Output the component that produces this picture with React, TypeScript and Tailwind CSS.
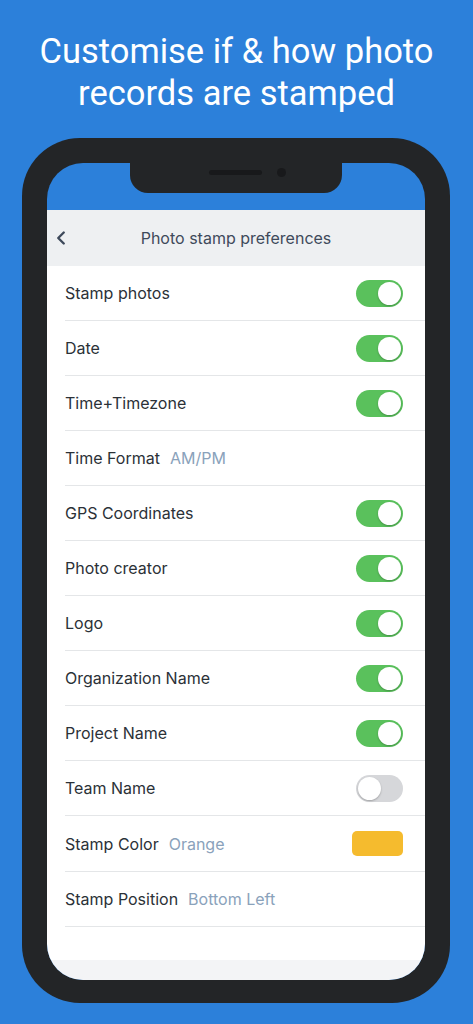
import { ChevronLeft } from "lucide-react"

type Row =
  | { label: string; kind: "toggle"; on: boolean }
  | { label: string; kind: "value"; value: string }
  | { label: string; kind: "color"; value: string }

const rows: Row[] = [
  { label: "Stamp photos", kind: "toggle", on: true },
  { label: "Date", kind: "toggle", on: true },
  { label: "Time+Timezone", kind: "toggle", on: true },
  { label: "Time Format", kind: "value", value: "AM/PM" },
  { label: "GPS Coordinates", kind: "toggle", on: true },
  { label: "Photo creator", kind: "toggle", on: true },
  { label: "Logo", kind: "toggle", on: true },
  { label: "Organization Name", kind: "toggle", on: true },
  { label: "Project Name", kind: "toggle", on: true },
  { label: "Team Name", kind: "toggle", on: false },
  { label: "Stamp Color", kind: "color", value: "Orange" },
  { label: "Stamp Position", kind: "value", value: "Bottom Left" },
]

function Toggle({ on }: { on: boolean }) {
  return (
    <span
      className={
        on
          ? "flex h-[27px] w-[47px] items-center justify-end rounded-full bg-[#5ac15c] px-[2px]"
          : "flex h-[27px] w-[47px] items-center justify-start rounded-full bg-[#d6d7da] px-[2px]"
      }
    >
      <span className="h-[23px] w-[23px] rounded-full bg-white shadow-[0_1px_2px_rgba(0,0,0,0.25)]" />
    </span>
  )
}

export default function App() {
  return (
    <div className="flex h-[1024px] w-[473px] flex-col overflow-hidden bg-[#2c80da]">
      <h1 className="pt-[30px] text-center font-['Roboto',sans-serif] text-[34.5px] leading-[42px] font-normal text-white">
        Customise if &amp; how photo
        <br />
        records are stamped
      </h1>

      {/* phone */}
      <div className="relative ml-[22px] mt-[24px] h-[865px] w-[428px] rounded-[58px] bg-[#232527] px-[25px] pb-[23px] pt-[25px]">
        {/* notch */}
        <div className="absolute left-[108px] top-[24px] z-10 flex h-[31px] w-[212px] items-start justify-center gap-[15px] rounded-b-[18px] bg-[#232527] pl-[22px] pt-[6px]">
          <span className="mt-[2px] h-[5px] w-[53px] rounded-full bg-[#18191b]" />
          <span className="h-[9px] w-[9px] rounded-full bg-[#18191b]" />
        </div>

        <div className="flex h-full flex-col overflow-hidden rounded-[36px] bg-[#2c80da] font-['Inter',sans-serif]">
          <div className="h-[47px] shrink-0" />
          <div className="relative flex h-[56px] shrink-0 items-center justify-center bg-[#eef0f2]">
            <ChevronLeft className="absolute left-[3px] h-[22px] w-[22px] text-[#3e4a5b]" strokeWidth={2.6} />
            <span className="text-[16px] text-[#3e4a5b]">Photo stamp preferences</span>
          </div>
          <div className="flex flex-1 flex-col bg-white">
            {rows.map((row) => (
              <div key={row.label} className="pl-[18px]">
                <div
                  className={
                    row.kind === "color"
                      ? "flex h-[56px] items-center justify-between border-b border-[#e4e6e8] pr-[22px]"
                      : "flex h-[55px] items-center justify-between border-b border-[#e4e6e8] pr-[22px]"
                  }
                >
                  <div className="flex items-center gap-[10px] text-[16px]">
                    <span className="text-[#2b3137]">{row.label}</span>
                    {row.kind !== "toggle" && <span className="text-[#8aa2bb]">{row.value}</span>}
                  </div>
                  {row.kind === "toggle" && <Toggle on={row.on} />}
                  {row.kind === "color" && <span className="h-[25px] w-[51px] rounded-[5px] bg-[#f5bb2e]" />}
                </div>
              </div>
            ))}
          </div>
          <div className="h-[20px] shrink-0 bg-[#f3f4f6]" />
        </div>
      </div>
    </div>
  )
}
